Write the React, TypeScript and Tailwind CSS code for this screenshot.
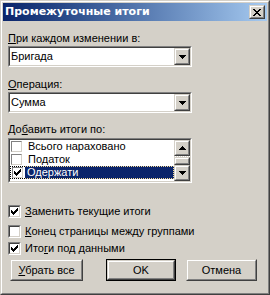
import React from 'react'

const font = "font-['Liberation_Sans',Arial,sans-serif]"

function Raised({ className = '', children }: { className?: string; children?: React.ReactNode }){
  return (
    <div className={`border border-t-[#D4D0C8] border-l-[#D4D0C8] border-r-[#404040] border-b-[#404040] ${className}`}>
      <div className="h-full border border-t-white border-l-white border-r-[#808080] border-b-[#808080] bg-[#D4D0C8] flex items-center justify-center">
        {children}
      </div>
    </div>
  )
}

function Sunken({ className = '', children }: { className?: string; children?: React.ReactNode }){
  return (
    <div className={`border border-t-[#808080] border-l-[#808080] border-r-white border-b-white ${className}`}>
      <div className="h-full border border-t-[#404040] border-l-[#404040] border-r-[#D4D0C8] border-b-[#D4D0C8] bg-white flex">
        {children}
      </div>
    </div>
  )
}

function Arrow({ up = false }: { up?: boolean }){
  const rows = up ? [[3,1],[2,3],[1,5],[0,7]] : [[0,7],[1,5],[2,3],[3,1]]
  return (
    <svg width="7" height="4" shapeRendering="crispEdges">
      {rows.map(([x,w],i)=><rect key={i} x={x} y={i} width={w} height={1} fill="#000"/>)}
    </svg>
  )
}

function Tick(){
  const px: [number,number,number][] = [[6,0,1],[5,1,2],[0,2,1],[4,2,3],[0,3,2],[3,3,3],[0,4,5],[1,5,3],[2,6,1]]
  return (
    <svg width="7" height="7" shapeRendering="crispEdges">
      {px.map(([x,y,w],i)=><rect key={i} x={x} y={y} width={w} height={1} fill="#000"/>)}
    </svg>
  )
}

function CloseX(){
  const px: [number,number,number][] = [[0,0,2],[6,0,2],[1,1,2],[5,1,2],[2,2,4],[3,3,2],[2,4,4],[1,5,2],[5,5,2],[0,6,2],[6,6,2]]
  return (
    <svg width="8" height="7" shapeRendering="crispEdges">
      {px.map(([x,y,w],i)=><rect key={i} x={x} y={y} width={w} height={1} fill="#000"/>)}
    </svg>
  )
}

function Check({ checked }: { checked?: boolean }){
  return (
    <Sunken className="w-[13px] h-[13px] shrink-0">
      <div className="w-full h-full flex items-center justify-center">{checked && <Tick/>}</div>
    </Sunken>
  )
}

function ListCheck({ checked }: { checked?: boolean }){
  return (
    <div className="w-[11px] h-[11px] shrink-0 border border-t-[#808080] border-l-[#808080] border-r-[#D4D0C8] border-b-[#D4D0C8] bg-white flex items-center justify-center">
      {checked && <Tick/>}
    </div>
  )
}

function Combo({ value }: { value: string }){
  return (
    <Sunken className="w-[184px] h-[21px]">
      <div className="flex-1 pl-[1px] text-[11px] leading-[17px]">{value}</div>
      <Raised className="w-[16px] h-[17px]"><Arrow/></Raised>
    </Sunken>
  )
}

const items = [
  { label: 'Всього нараховано', checked: false },
  { label: 'Податок', checked: false },
  { label: 'Одержати', checked: true, selected: true },
]

export default function App(){
  return (
    <div className={`w-[270px] h-[295px] bg-[#D4D0C8] border border-t-[#D4D0C8] border-l-[#D4D0C8] border-r-[#404040] border-b-[#404040] text-black ${font}`}>
      <div className="h-full border border-t-white border-l-white border-r-[#808080] border-b-[#808080] p-px flex flex-col">
        <div className="h-[18px] shrink-0 bg-linear-to-r from-[#0A246A] to-[#A6CAF0] flex items-center justify-between pl-[2px] pr-[2px]">
          <span className="text-white font-bold text-[11px] leading-[18px] font-['DejaVu_Sans',sans-serif]">Промежуточные итоги</span>
          <Raised className="w-[16px] h-[14px]"><CloseX/></Raised>
        </div>

        <div className="flex-1 flex flex-col pl-[5px] text-[11px] leading-[13px]">
          <div className="mt-[11px]"><span className="underline">П</span>ри каждом изменении в:</div>
          <div className="mt-[1px]"><Combo value="Бригада"/></div>

          <div className="mt-[11px]"><span className="underline">О</span>перация:</div>
          <div className="mt-[1px]"><Combo value="Сумма"/></div>

          <div className="mt-[10px]">До<span className="underline">б</span>авить итоги по:</div>
          <div className="mt-[2px]">
            <Sunken className="w-[184px] h-[45px]">
              <div className="flex-1 flex flex-col">
                {items.map(it => it.selected ? (
                  <div key={it.label} className="h-[13px] flex">
                    <div className="w-[15px] border-y border-l border-dotted border-black flex items-center pl-px">
                      <ListCheck checked={it.checked}/>
                    </div>
                    <div className="flex-1 bg-[#0A246A] text-white border-y border-r border-dotted border-[#F5DB95] pl-[2px] leading-[11px]">{it.label}</div>
                  </div>
                ) : (
                  <div key={it.label} className="h-[13px] flex items-center pl-[1px]">
                    <ListCheck checked={it.checked}/>
                    <span className="ml-[6px]">{it.label}</span>
                  </div>
                ))}
              </div>
              <div className="w-[16px] flex flex-col">
                <Raised className="h-[16px]"><Arrow up/></Raised>
                <div className="h-[1px] bg-[repeating-conic-gradient(#fff_0_25%,#D4D0C8_0_50%)] bg-[length:2px_2px]"/>
                <Raised className="h-[8px]"/>
                <Raised className="h-[16px]"><Arrow/></Raised>
              </div>
            </Sunken>
          </div>

          <div className="mt-[22px] flex items-center gap-[4px]">
            <Check checked/>
            <span><span className="underline">З</span>аменить текущие итоги</span>
          </div>
          <div className="mt-[7px] flex items-center gap-[4px]">
            <Check/>
            <span><span className="underline">К</span>онец страницы между группами</span>
          </div>
          <div className="mt-[4px] flex items-center gap-[4px]">
            <Check checked/>
            <span>Ито<span className="underline">г</span>и под данными</span>
          </div>

          <div className="mt-[4px] flex">
            <Raised className="ml-[2px] w-[73px] h-[22px]"><span><span className="underline">У</span>брать все</span></Raised>
            <div className="ml-[23px] w-[70px] h-[22px] border border-black">
              <Raised className="h-full">OK</Raised>
            </div>
            <Raised className="ml-[10px] w-[71px] h-[22px]">Отмена</Raised>
          </div>
        </div>
      </div>
    </div>
  )
}
